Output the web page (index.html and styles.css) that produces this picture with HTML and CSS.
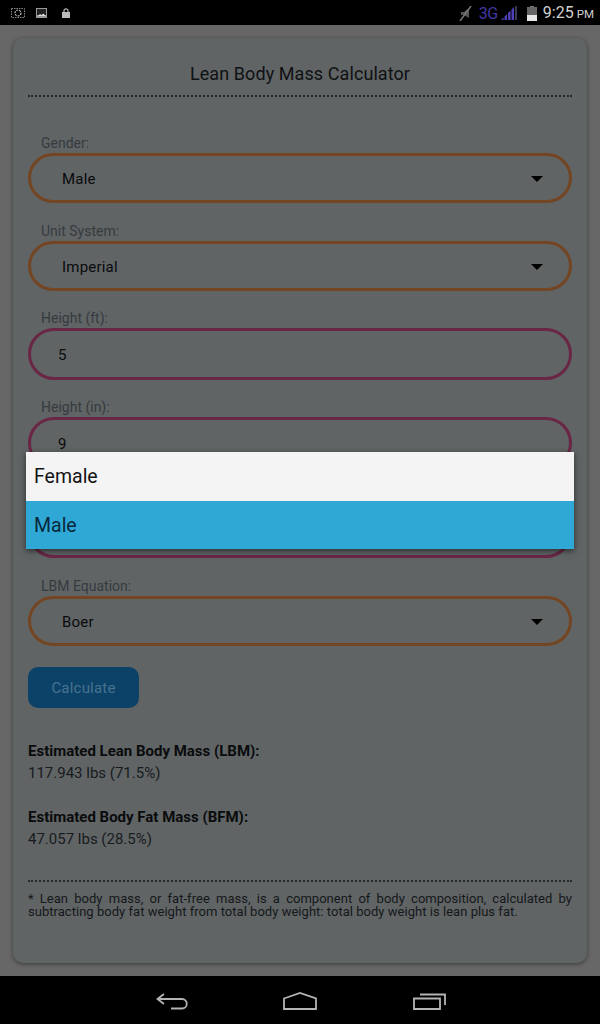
FILE: index.html
```html
<!DOCTYPE html>
<html lang="en">
<head>
<meta charset="utf-8">
<title>Lean Body Mass Calculator</title>
<link rel="stylesheet" href="styles.css">
</head>
<body>
<div class="screen">
  <header class="status">
    <div class="status-left">
      <svg class="ic ic-shot" width="14" height="10" viewBox="0 0 14 10"><rect x=".5" y=".5" width="13" height="9" fill="none" stroke="#888" stroke-dasharray="1.500 1"/><circle cx="7" cy="5" r="3" fill="none" stroke="#bbb" stroke-width="1.200" stroke-dasharray="2 1"/></svg>
      <svg class="ic ic-pic" width="11" height="10" viewBox="0 0 11 10"><rect width="11" height="10" fill="#9a9a9a"/><rect x="1" y="1" width="9" height="6" fill="#222"/><path d="M2 8l2-2 1.500 1 2-1.500 2 2.500z" fill="#ddd"/></svg>
      <svg class="ic" width="8" height="10" viewBox="0 0 8 10"><path d="M2 5V2.800a2 2 0 0 1 4 0V5" fill="none" stroke="#bbb" stroke-width="1.200"/><rect y="4" width="8" height="6" fill="#bbb"/></svg>
    </div>
    <div class="status-right">
      <svg class="mute" width="13" height="15" viewBox="0 0 13 15"><path d="M2 6h3l5-4v10l-5-3H2z" fill="#555"/><path d="M1 15L12 0" stroke="#777" stroke-width="1.500"/></svg>
      <span class="net">3G</span>
      <svg class="sig" width="16" height="14" viewBox="0 0 16 14"><path d="M0 14h2.500v-2.500zM3.500 14H6V8L3.500 10.500zM7 14h2.500V4.500L7 7zM10.500 14H13V1l-2.500 2.500z" fill="#4f40b8"/><path d="M14 14h2V0l-2 .5z" fill="#3a3a55"/></svg>
      <svg class="batt" width="10" height="15" viewBox="0 0 10 15"><rect x="3" width="4" height="2" fill="#777"/><rect y="1" width="10" height="14" fill="#666"/><rect y="9" width="10" height="6" fill="#e8e8e8"/></svg>
      <span class="clock">9:25<small>PM</small></span>
    </div>
  </header>

  <main class="page">
    <section class="card">
      <h1 class="title">Lean Body Mass Calculator</h1>

      <div class="field field-select field-first">
        <label class="label">Gender:</label>
        <div class="box select"><span>Male</span><i class="caret"></i></div>
      </div>
      <div class="field field-select">
        <label class="label">Unit System:</label>
        <div class="box select"><span>Imperial</span><i class="caret"></i></div>
      </div>
      <div class="field field-input">
        <label class="label">Height (ft):</label>
        <div class="box input"><span>5</span></div>
      </div>
      <div class="field field-input">
        <label class="label">Height (in):</label>
        <div class="box input"><span>9</span></div>
      </div>
      <div class="field field-input">
        <label class="label">Weight (lbs):</label>
        <div class="box input"><span>165</span></div>
      </div>
      <div class="field field-select">
        <label class="label">LBM Equation:</label>
        <div class="box select"><span>Boer</span><i class="caret"></i></div>
      </div>

      <button class="btn">Calculate</button>

      <div class="results">
        <p class="res-head">Estimated Lean Body Mass (LBM):</p>
        <p class="res-val">117.943 lbs (71.5%)</p>
        <p class="res-head second">Estimated Body Fat Mass (BFM):</p>
        <p class="res-val">47.057 lbs (28.5%)</p>
      </div>

      <p class="note">* Lean body mass, or fat-free mass, is a component of body composition, calculated by subtracting body fat weight from total body weight: total body weight is lean plus fat.</p>
    </section>
  </main>

  <div class="popup">
    <div class="opt">Female</div>
    <div class="opt opt-on">Male</div>
  </div>

  <nav class="nav">
    <svg class="nav-back" width="33" height="17" viewBox="0 0 33 17"><path d="M8 1L1.500 6 8 11M1.500 6H26a4.500 4.500 0 0 1 0 9.500H15" fill="none" stroke="#b4b4b4" stroke-width="1.800"/></svg>
    <svg class="nav-home" width="34" height="18" viewBox="0 0 34 18"><path d="M1 6.500L17 1l16 5.500V17H1z" fill="none" stroke="#b4b4b4" stroke-width="1.800"/></svg>
    <svg class="nav-recent" width="33" height="17" viewBox="0 0 33 17"><path d="M1 5.500h26V16H1zM7 1.500h25V12" fill="none" stroke="#b4b4b4" stroke-width="1.800"/></svg>
  </nav>
</div>
</body>
</html>
```

FILE: styles.css
```css
* { box-sizing: border-box; }
html, body { margin: 0; padding: 0; }
body { font-family: Roboto, "Liberation Sans", sans-serif; background: #666; }
.screen { position: relative; width: 600px; height: 1024px; display: flex; flex-direction: column; overflow: hidden; }

.status { height: 25px; flex: none; background: #000; display: flex; justify-content: space-between; align-items: center; }
.status-left { display: flex; align-items: center; padding-left: 11px; margin-top: 1px; }
.ic { display: block; }
.ic-shot { margin-right: 11px; }
.ic-pic { margin-right: 15px; }
.status-right { display: flex; align-items: center; padding-right: 6px; margin-top: 1px; }
.mute { display: block; margin-right: 7px; }
.net { color: #4138a4; font-size: 16px; line-height: 25px; letter-spacing: -.4px; }
.sig { display: block; margin: 0 10px 0 3px; }
.batt { display: block; margin: 0 6px 0 0; }
.clock { color: #d0d0d0; font-size: 16px; line-height: 25px; }
.clock small { font-size: 11.500px; margin-left: 3px; }

.page { flex: 1; background: #676767; padding: 13px; display: flex; }
.card { flex: 1; background: #606465; border-radius: 10px; padding: 24px 15px 0; box-shadow: 0 1px 4px rgba(0,0,0,.45); }
.title { margin: 0; height: 35px; padding-top: 1px; border-bottom: 2px dotted #26282a; font-weight: 400; font-size: 18px; line-height: 22px; text-align: center; color: #0f1113; letter-spacing: .08px; }

.label { display: block; height: 16px; padding-left: 13px; font-size: 14px; line-height: 13px; color: #363b40; }
.box { display: flex; align-items: center; justify-content: space-between; border-style: solid; border-width: 3px; border-radius: 26px; padding: 1px 26px 0 31px; font-size: 15px; color: #0a0b0c; letter-spacing: .2px; }
.select { height: 50px; border-color: #744522; }
.input { height: 52px; border-color: #6a2645; padding-left: 27px; }
.field-select { padding-top: 22px; }
.field-input { padding-top: 21px; }
.field-first { padding-top: 40px; }
.caret { width: 0; height: 0; border-left: 6px solid transparent; border-right: 6px solid transparent; border-top: 6px solid #000; }

.btn { display: block; width: 111px; height: 41px; margin: 21px 0 0; border: 0; border-radius: 10px; background: #0c4268; color: #47728f; font: 400 15px Roboto, "Liberation Sans", sans-serif; letter-spacing: .2px; }

.results { margin-top: 32px; font-size: 15px; line-height: 22px; color: #0a0b0c; }
.results p { margin: 0; }
.res-head { font-weight: 700; }
.res-head.second { margin-top: 22px; }
.res-val { color: #181b1e; }

.note { margin: 30px 0 0; padding-top: 10px; border-top: 2px dotted #26282a; font-size: 13px; line-height: 13px; text-align: justify; color: #15181a; letter-spacing: .03px; }

.popup { position: absolute; left: 26px; top: 452px; width: 548px; box-shadow: 0 2px 6px rgba(0,0,0,.55); }
.opt { height: 49px; padding-left: 8px; font-size: 19.500px; line-height: 50px; color: #141414; background: #f4f4f4; }
.opt-on { height: 48px; background: #2fa8d6; color: #06283c; line-height: 49px; }

.nav { height: 48px; flex: none; background: #000; display: flex; align-items: flex-start; padding-top: 16px; }
.nav-back { margin-left: 156px; margin-top: 1px; }
.nav-home { margin-left: 94px; }
.nav-recent { margin-left: 96px; margin-top: 1px; }
```
